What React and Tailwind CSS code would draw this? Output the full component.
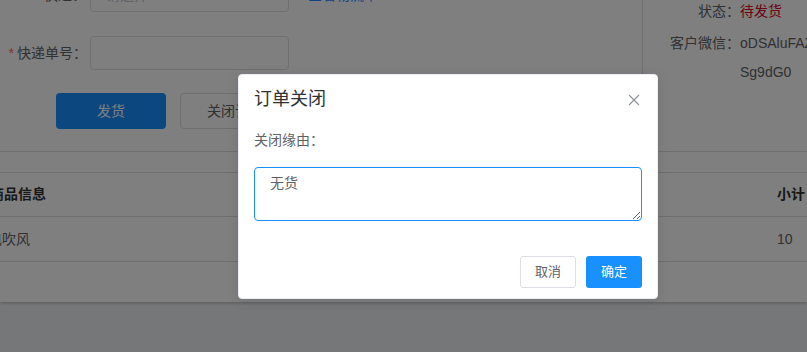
import React from "react";

const font = { fontFamily: '"Liberation Sans", "Noto Sans CJK SC", sans-serif' };

export default function App() {
  return (
    <div className="relative w-[807px] h-[352px] overflow-hidden bg-[#eaeef2] text-[14px] text-[#606266]" style={font}>
      {/* page card */}
      <div className="h-[302px] bg-white shadow-[0_1px_3px_rgba(0,0,0,0.25)] flex flex-col">
        <div className="flex border-b border-[#dfdfdf]">
          {/* left form */}
          <div className="flex-1 flex flex-col">
            <div className="-mt-[22px] h-[34px] flex items-center">
              <div className="w-[90px] pr-[4px] text-right">快递：</div>
              <div className="w-[199px] h-[34px] border border-[#dcdfe6] rounded-[4px] flex items-center px-[15px] text-[#c0c4cc]">请选择</div>
              <div className="ml-[19px] text-[#1890ff]">查看物流单</div>
            </div>
            <div className="mt-[24px] h-[34px] flex items-center">
              <div className="w-[90px] pr-[3px] text-right"><span className="text-[#f56c6c] mr-[3px]">*</span>快递单号：</div>
              <div className="w-[199px] h-[34px] border border-[#dcdfe6] rounded-[4px]"></div>
            </div>
            <div className="mt-[23px] h-[36px] flex items-center pl-[56px] gap-[14px]">
              <div className="w-[110px] h-[36px] rounded-[4px] bg-[#1890ff] text-white flex items-center justify-center">发货</div>
              <div className="w-[110px] h-[36px] rounded-[4px] border border-[#dcdfe6] bg-white text-[#606266] flex items-center justify-center">关闭订单</div>
            </div>
            <div className="h-[22px]"></div>
          </div>
          {/* right panel */}
          <div className="w-[165px] border-l border-[#dfdfdf] flex flex-col -mt-[3px] gap-[3px] leading-[29px]">
            <div className="flex">
              <div className="w-[97px] text-right">状态：</div>
              <div className="text-[#d9001b]">待发货</div>
            </div>
            <div className="flex">
              <div className="w-[97px] text-right shrink-0">客户微信：</div>
              <div className="flex flex-col">
                <span className="whitespace-nowrap">oDSAluFAZ3kYq8Tr</span>
                <span>Sg9dG0</span>
              </div>
            </div>
          </div>
        </div>
        {/* table */}
        <div className="mt-[20px] border-t border-[#dfdfdf] -ml-[10px]">
          <div className="grid grid-cols-[1fr_30px] h-[44px] items-center border-b border-[#dfdfdf] font-bold text-[#303133]">
            <div>商品信息</div>
            <div>小计</div>
          </div>
          <div className="grid grid-cols-[1fr_30px] h-[45px] items-center border-b border-[#dfdfdf]">
            <div className="-ml-[2px]">电吹风</div>
            <div>10</div>
          </div>
        </div>
      </div>

      {/* overlay */}
      <div className="absolute inset-0 bg-black/50"></div>

      {/* modal */}
      <div className="absolute left-[238px] top-[74px] w-[420px] h-[225px] bg-white rounded-[4px] border border-[#ebeef5] shadow-[0_2px_12px_rgba(0,0,0,0.1)] flex flex-col">
        <div className="flex items-center justify-between pt-[12px] pl-[15px] pr-[17px] h-[36px] leading-[24px]">
          <span className="text-[18px] text-[#303133]">订单关闭</span>
          <svg width="12" height="12" viewBox="0 0 12 12" className="mt-[1px]">
            <path d="M1 1 L11 11 M11 1 L1 11" stroke="#909399" strokeWidth="1.2" fill="none" />
          </svg>
        </div>
        <div className="px-[15px] mt-[19px] leading-[20px]">关闭缘由：</div>
        <div className="px-[15px] mt-[17px]">
          <textarea
            defaultValue="无货"
            className="block w-[388px] h-[54px] border border-[#1890ff] rounded-[4px] px-[15px] py-[5px] leading-[21px] text-[14px] text-[#606266] outline-none resize-y"
            style={font}
          />
        </div>
        <div className="flex justify-end gap-[10px] px-[15px] mt-[35px]">
          <div className="w-[56px] h-[32px] rounded-[3px] border border-[#dcdfe6] flex items-center justify-center text-[13px] text-[#606266]">取消</div>
          <div className="w-[56px] h-[32px] rounded-[3px] bg-[#1890ff] flex items-center justify-center text-[13px] text-white">确定</div>
        </div>
      </div>
    </div>
  );
}
